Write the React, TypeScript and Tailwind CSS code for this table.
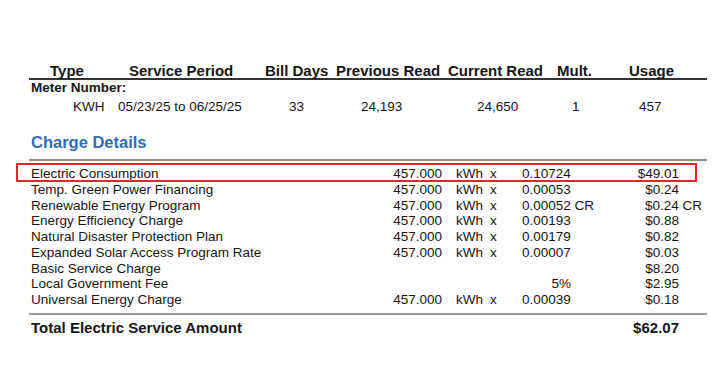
import React from "react";

type Row = {
  d: string;
  q?: string;
  r?: string;
  a: string;
  cr?: boolean;
  rr?: boolean;
  h?: string;
};

const rows: Row[] = [
  { d: "Electric Consumption", q: "457.000", r: "0.10724", a: "$49.01" },
  { d: "Temp. Green Power Financing", q: "457.000", r: "0.00053", a: "$0.24" },
  { d: "Renewable Energy Program", q: "457.000", r: "0.00052 CR", a: "$0.24 CR", cr: true },
  { d: "Energy Efficiency Charge", q: "457.000", r: "0.00193", a: "$0.88" },
  { d: "Natural Disaster Protection Plan", q: "457.000", r: "0.00179", a: "$0.82" },
  { d: "Expanded Solar Access Program Rate", q: "457.000", r: "0.00007", a: "$0.03" },
  { d: "Basic Service Charge", a: "$8.20" },
  { d: "Local Government Fee", r: "5%", a: "$2.95", rr: true },
  { d: "Universal Energy Charge", q: "457.000", r: "0.00039", a: "$0.18" },
];

export default function App() {
  return (
    <div
      className="relative w-[720px] h-[391px] bg-white text-[#161616] overflow-hidden"
      style={{ fontFamily: '"Liberation Sans", Arial, sans-serif' }}
    >
      <div className="ml-[29px] w-[678px] pt-[63px]">
        {/* Header */}
        <div className="flex h-[17px] pl-[21px] text-[15px] font-bold leading-[15px] whitespace-nowrap border-b-2 border-[#333]">
          <div className="w-[79px]">Type</div>
          <div className="w-[136px]">Service Period</div>
          <div className="w-[71px]">Bill Days</div>
          <div className="w-[112px]">Previous Read</div>
          <div className="w-[109px]">Current Read</div>
          <div className="w-[72px]">Mult.</div>
          <div>Usage</div>
        </div>
        {/* Meter Number */}
        <div className="h-[16px] pl-[2px] text-[13.5px] font-bold leading-[16px]">Meter Number:</div>
        {/* KWH row */}
        <div className="mt-[3px] flex h-[16px] pl-[44px] text-[13.5px] leading-[16px] whitespace-nowrap">
          <div className="w-[45px]">KWH</div>
          <div className="w-[171px]">05/23/25 to 06/25/25</div>
          <div className="w-[72px]">33</div>
          <div className="w-[116px]">24,193</div>
          <div className="w-[95px]">24,650</div>
          <div className="w-[67px]">1</div>
          <div>457</div>
        </div>
        {/* Charge Details */}
        <div className="mt-[17px] h-[29px] border-b-2 border-[#8c8c8c] pl-[2px]">
          <div className="text-[16.5px] font-bold leading-[20px] text-[#2f6eb5]">Charge Details</div>
        </div>
        <div className="pt-[5px] text-[13.5px] whitespace-nowrap">
          {rows.map((row, i) => (
            <div key={i} className="flex h-[15.75px] leading-[15.75px] pl-[2px]">
              <div className="w-[339px]">{row.d}</div>
              <div className="w-[72px] text-right">{row.q ?? ""}</div>
              <div className="w-[14px]" />
              <div className="w-[34px]">{row.q ? "kWh" : ""}</div>
              <div className="w-[32px]">{row.q ? "x" : ""}</div>
              <div className={`w-[49px] ${row.rr ? "text-right" : "text-left"}`}>{row.r ?? ""}</div>
              <div className="w-[108px] flex justify-end">
                <span className={row.cr ? "mr-[-23px]" : ""}>{row.a}</span>
              </div>
            </div>
          ))}
        </div>
        {/* Total */}
        <div className="mt-[5px] border-t-2 border-[#9a9a9a] pt-[4px] flex text-[15px] font-bold leading-[18px] pl-[2px] whitespace-nowrap">
          <div className="w-[540px]">Total Electric Service Amount</div>
          <div className="w-[108px] text-right">$62.07</div>
        </div>
      </div>
      {/* Red highlight box */}
      <div className="absolute left-[16px] top-[163px] w-[681px] h-[19px] border-2 border-[#e3262a]" />
    </div>
  );
}
